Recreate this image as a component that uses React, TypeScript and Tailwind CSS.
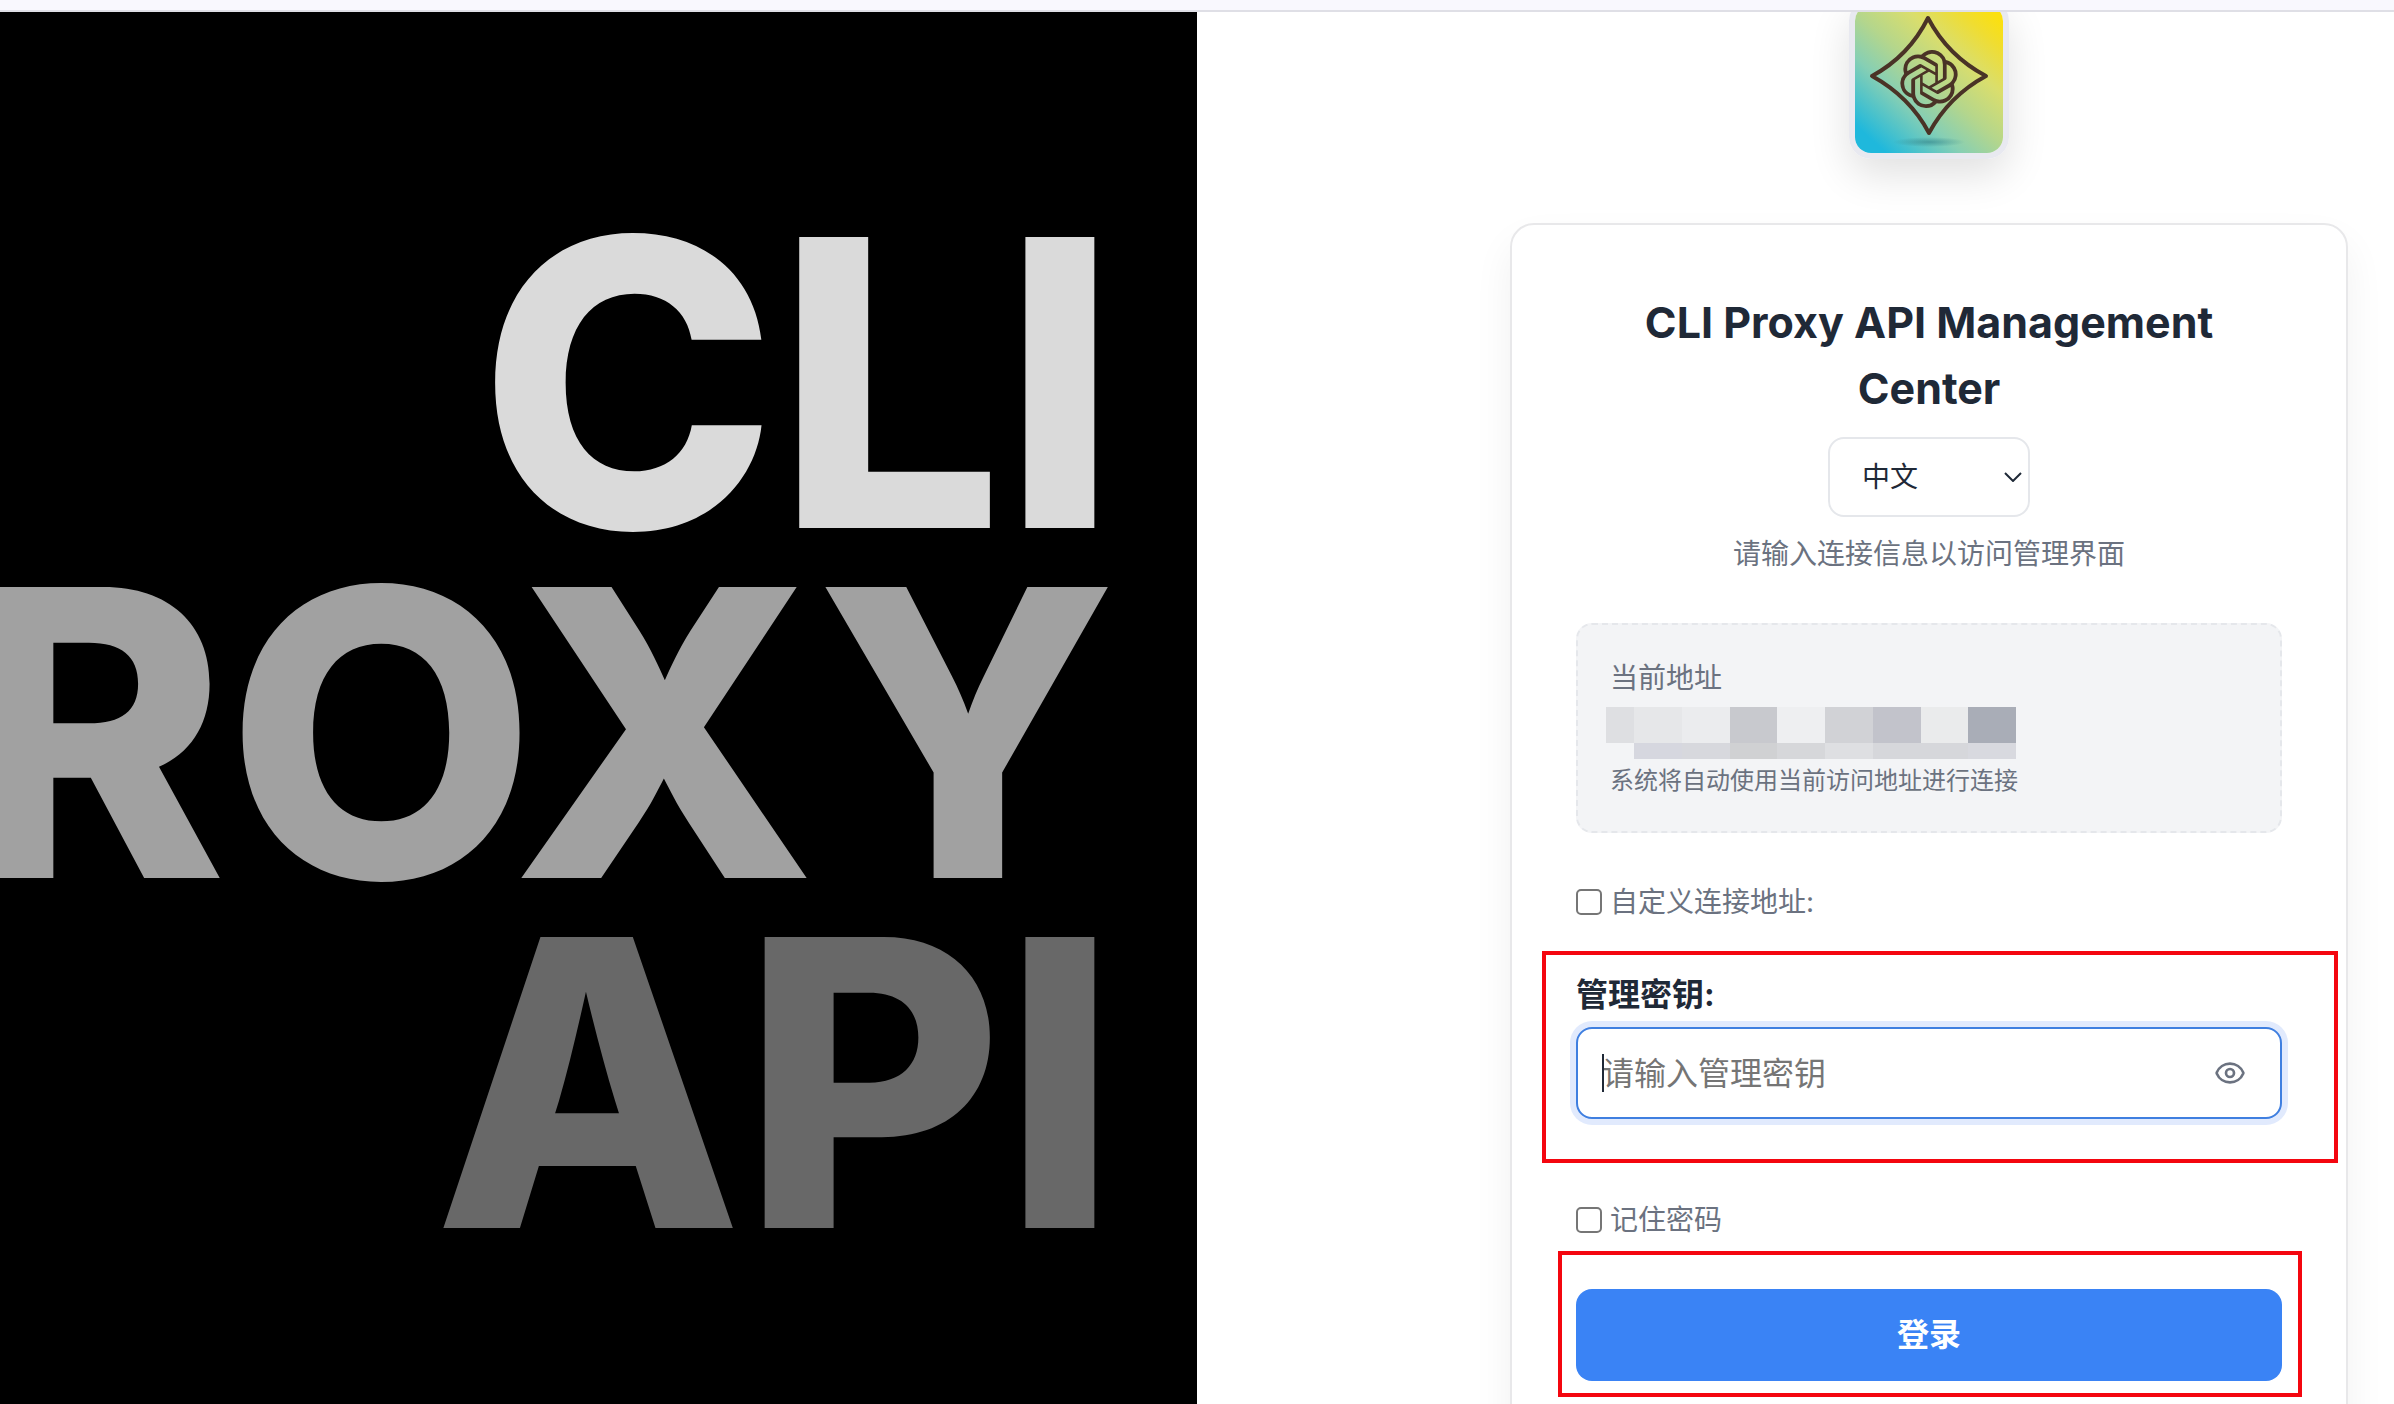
import { useState } from 'react'
import { Eye } from 'lucide-react'
import { SiOpenai } from 'react-icons/si'

const mosaicTop = [
  'bg-[#dedfe2]',
  'bg-[#e6e7e9]',
  'bg-[#ebecee]',
  'bg-[#c8c9ce]',
  'bg-[#eeeff1]',
  'bg-[#d1d2d6]',
  'bg-[#c2c3cb]',
  'bg-[#eaebec]',
  'bg-[#a9adb7]',
]

const mosaicBottom = [
  'bg-transparent',
  'bg-[#d6d7df]',
  'bg-[#d7d8dd]',
  'bg-[#d0d1d3]',
  'bg-[#d6d7da]',
  'bg-[#dedfe2]',
  'bg-[#d6d7db]',
  'bg-[#d6d7db]',
  'bg-[#d8d9df]',
]

function Logo() {
  return (
    <div className="rounded-[22px] border-[6px] border-[#e8e9f0] shadow-[0_16px_40px_rgba(0,0,0,0.12)]">
      <div className="relative flex size-[148px] items-center justify-center overflow-hidden rounded-2xl bg-[linear-gradient(42deg,#1fb8dc_10%,#86cfb4_34%,#b4d68c_50%,#dade6c_68%,#f0dd30_84%,#fbe00f_94%)]">
        <svg viewBox="0 0 148 148" className="absolute inset-0 size-full" fill="none">
          <defs>
            <radialGradient id="floor">
              <stop offset="0" stopColor="#2f7f86" stopOpacity="0.6" />
              <stop offset="1" stopColor="#2f7f86" stopOpacity="0" />
            </radialGradient>
          </defs>
          <ellipse cx="74" cy="137" rx="36" ry="5" fill="url(#floor)" />
          <path
            d="M73 13Q93 51 131 71Q94 91 74 128Q55 92 17 71Q54 51 73 13Z"
            stroke="#4a3326"
            strokeWidth="4"
            strokeLinejoin="round"
          />
        </svg>
        <SiOpenai className="relative size-[58px] -scale-x-100 text-[#4a3326]" />
      </div>
    </div>
  )
}

function CheckRow({ id, label }: { id: string; label: string }) {
  return (
    <div className="flex items-center gap-2">
      <input
        id={id}
        type="checkbox"
        className="size-[26px] appearance-none rounded-[5px] border-2 border-[#767676] bg-white checked:bg-blue-500"
      />
      <label htmlFor={id} className="text-[28px] leading-[42px] text-[#6b7280]">
        {label}
      </label>
    </div>
  )
}

export default function App() {
  const [visible, setVisible] = useState(false)

  return (
    <div className="flex h-screen flex-col overflow-hidden bg-white font-['Inter','Noto_Sans_CJK_SC',sans-serif] text-[#1f2937]">
      <div className="h-3 shrink-0 border-b-2 border-[#dfdfe6] bg-[#f9f8fe]" />

      <div className="grid min-h-0 flex-1 grid-cols-2">
        {/* Brand */}
        <div className="flex flex-col items-end justify-center overflow-hidden bg-black pt-12 pr-20 text-[400px] leading-[350px] font-extrabold">
          <span className="text-[#dadada]">CLI</span>
          <span className="text-[#a1a1a1]">PROXY</span>
          <span className="text-[#686868]">API</span>
        </div>

        {/* Login */}
        <div className="flex justify-end overflow-hidden">
          <div className="-mt-[13px] mr-[46px] flex w-[70%] flex-col items-center gap-16">
            <Logo />

            <form
              className="w-full rounded-3xl border-2 border-[#e8e8ea] bg-white p-16 shadow-[0_20px_40px_rgba(0,0,0,0.06)]"
              onSubmit={(e) => e.preventDefault()}
            >
              <div className="flex flex-col items-center text-center">
                <h1 className="text-[43px] leading-[66px] font-bold">CLI Proxy API Management Center</h1>
                <div className="relative mt-4 w-[202px]">
                  <select
                    aria-label="语言"
                    className="h-20 w-full appearance-none rounded-2xl border-2 border-[#e5e7eb] bg-white pl-8 text-[28px]"
                  >
                    <option>中文</option>
                    <option>English</option>
                  </select>
                  <svg
                    viewBox="0 0 18 10"
                    className="pointer-events-none absolute top-[35px] right-2 h-[10px] w-[18px]"
                    fill="none"
                    stroke="#1f2937"
                    strokeWidth="2"
                  >
                    <path d="M1 1l8 8 8-8" />
                  </svg>
                </div>
                <p className="mt-4 text-[28px] leading-[42px] text-[#6b7280]">请输入连接信息以访问管理界面</p>
              </div>

              <div className="mt-12 rounded-2xl border-2 border-dashed border-[#e5e7eb] bg-[#f3f4f6] p-8 text-[#6b7280]">
                <div className="text-[28px] leading-[42px]">当前地址</div>
                <div className="mt-2 -ml-1 w-[410px]">
                  <div className="grid h-9 grid-cols-[28px_repeat(8,1fr)]">
                    {mosaicTop.map((color, i) => (
                      <span key={i} className={color} />
                    ))}
                  </div>
                  <div className="grid h-4 grid-cols-[28px_repeat(8,1fr)]">
                    {mosaicBottom.map((color, i) => (
                      <span key={i} className={color} />
                    ))}
                  </div>
                </div>
                <div className="mt-1 text-[24px] leading-9">系统将自动使用当前访问地址进行连接</div>
              </div>

              <div className="mt-12">
                <CheckRow id="custom" label="自定义连接地址:" />
              </div>

              <div className="relative mt-12">
                <label htmlFor="secret" className="block text-[32px] leading-12 font-bold">
                  管理密钥:
                </label>
                <div className="relative mt-2">
                  <input
                    id="secret"
                    type={visible ? 'text' : 'password'}
                    placeholder="请输入管理密钥"
                    className="h-[92px] w-full rounded-2xl border-2 border-[#3f7fe0] bg-white px-6 text-[32px] ring-6 ring-[#e1eafd] outline-none placeholder:text-[#757575]"
                  />
                  <span className="absolute top-[27px] left-[26px] h-[38px] w-[2px] bg-[#1f2937]" />
                  <button
                    type="button"
                    aria-label="显示密钥"
                    className="absolute top-[22px] right-7 flex size-12 items-center justify-center text-[#6b7280]"
                    onClick={() => setVisible(!visible)}
                  >
                    <Eye className="size-8" />
                  </button>
                </div>
                <div className="pointer-events-none absolute -top-5 -right-14 -bottom-11 -left-[34px] border-4 border-[#f4060f]" />
              </div>

              <div className="mt-20">
                <CheckRow id="remember" label="记住密码" />
              </div>

              <div className="relative mt-12">
                <button type="submit" className="h-[92px] w-full rounded-2xl bg-[#3a83f5] text-[32px] font-bold text-white">
                  登录
                </button>
                <div className="pointer-events-none absolute -top-[38px] -right-5 -bottom-4 -left-[18px] border-4 border-[#f4060f]" />
              </div>
            </form>
          </div>
        </div>
      </div>
    </div>
  )
}
